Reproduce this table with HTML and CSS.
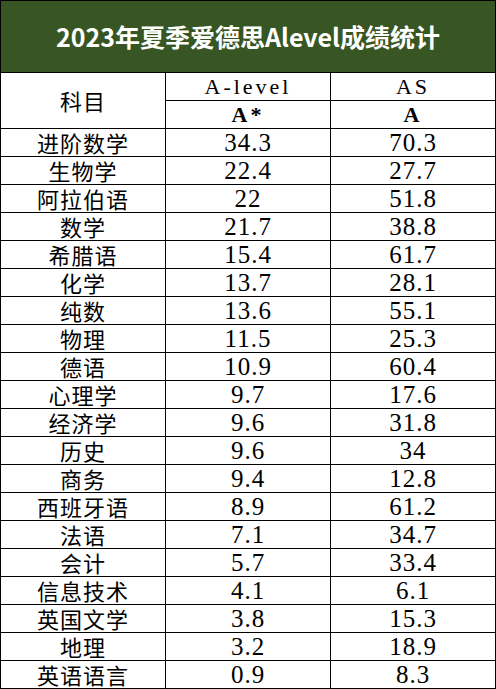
FILE: index.html
```html
<!DOCTYPE html>
<html lang="zh">
<head>
<meta charset="utf-8">
<title>2023年夏季爱德思Alevel成绩统计</title>
<link rel="stylesheet" href="styles.css">
</head>
<body>
<table class="stats">
  <thead>
    <tr class="title-row"><th colspan="3" class="title">2023年夏季爱德思Alevel成绩统计</th></tr>
    <tr><th rowspan="2" class="subject-head">科目</th><th class="level">A-level</th><th class="level">AS</th></tr>
    <tr><th class="grade">A*</th><th class="grade">A</th></tr>
  </thead>
  <tbody>
    <tr><td class="subj">进阶数学</td><td class="num">34.3</td><td class="num">70.3</td></tr>
    <tr><td class="subj">生物学</td><td class="num">22.4</td><td class="num">27.7</td></tr>
    <tr><td class="subj">阿拉伯语</td><td class="num">22</td><td class="num">51.8</td></tr>
    <tr><td class="subj">数学</td><td class="num">21.7</td><td class="num">38.8</td></tr>
    <tr><td class="subj">希腊语</td><td class="num">15.4</td><td class="num">61.7</td></tr>
    <tr><td class="subj">化学</td><td class="num">13.7</td><td class="num">28.1</td></tr>
    <tr><td class="subj">纯数</td><td class="num">13.6</td><td class="num">55.1</td></tr>
    <tr><td class="subj">物理</td><td class="num">11.5</td><td class="num">25.3</td></tr>
    <tr><td class="subj">德语</td><td class="num">10.9</td><td class="num">60.4</td></tr>
    <tr><td class="subj">心理学</td><td class="num">9.7</td><td class="num">17.6</td></tr>
    <tr><td class="subj">经济学</td><td class="num">9.6</td><td class="num">31.8</td></tr>
    <tr><td class="subj">历史</td><td class="num">9.6</td><td class="num">34</td></tr>
    <tr><td class="subj">商务</td><td class="num">9.4</td><td class="num">12.8</td></tr>
    <tr><td class="subj">西班牙语</td><td class="num">8.9</td><td class="num">61.2</td></tr>
    <tr><td class="subj">法语</td><td class="num">7.1</td><td class="num">34.7</td></tr>
    <tr><td class="subj">会计</td><td class="num">5.7</td><td class="num">33.4</td></tr>
    <tr><td class="subj">信息技术</td><td class="num">4.1</td><td class="num">6.1</td></tr>
    <tr><td class="subj">英国文学</td><td class="num">3.8</td><td class="num">15.3</td></tr>
    <tr><td class="subj">地理</td><td class="num">3.2</td><td class="num">18.9</td></tr>
    <tr><td class="subj">英语语言</td><td class="num">0.9</td><td class="num">8.3</td></tr>
  </tbody>
</table>
</body>
</html>
```

FILE: styles.css
```css
html, body {
  margin: 0;
  padding: 0;
  background: #ffffff;
}

.stats {
  border-collapse: collapse;
  width: 496px;
  table-layout: fixed;
  color: #000;
}

.stats th,
.stats td {
  border: 1px solid #000;
  padding: 0;
  height: 27px;
  text-align: center;
  vertical-align: middle;
  font-weight: normal;
  line-height: 27px;
  white-space: nowrap;
}

.stats .title {
  height: 71px;
  background: #375623;
  color: #ffffff;
  font-family: "Noto Sans CJK SC", "Noto Sans", sans-serif;
  font-weight: bold;
  font-size: 25px;
  line-height: 71px;
}

.subject-head,
.subj {
  font-family: "Noto Sans CJK SC", sans-serif;
  font-weight: 300;
  font-size: 22px;
  letter-spacing: 1px;
}

.level,
.grade {
  font-family: "Liberation Serif", serif;
  font-size: 22px;
  letter-spacing: 3px;
}

.stats .grade {
  font-weight: bold;
}

.num {
  font-family: "Liberation Serif", serif;
  font-size: 25px;
  letter-spacing: 1px;
}
```
